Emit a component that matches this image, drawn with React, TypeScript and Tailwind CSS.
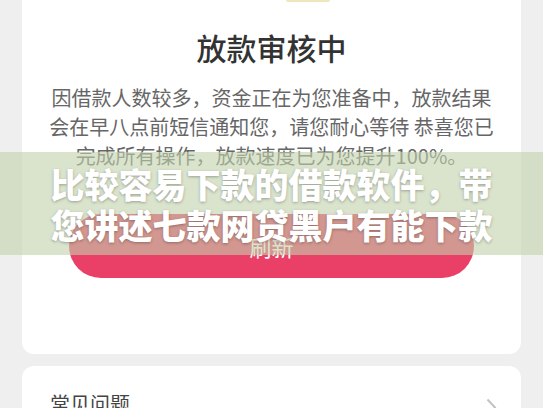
export default function App() {
  return (
    <div className="relative h-[408px] overflow-hidden bg-[#efefef] px-[22px] font-['Noto_Sans_CJK_SC','Noto_Sans',sans-serif]">
      <div className="flex flex-col items-center rounded-b-[12px] bg-white pb-[76px]">
        <div className="ml-[72px] h-[2px] w-[44px] rounded-b-full bg-[#efe6bd]" />
        <h1 className="mt-[27px] text-[30px] leading-[36px] font-medium text-[#333]">放款审核中</h1>
        <p className="mt-[18px] text-center text-[20px] leading-[29px] text-[#666]">
          因借款人数较多，资金正在为您准备中，放款结果
          <br />
          会在早八点前短信通知您，请您耐心等待 恭喜您已
          <br />
          完成所有操作，放款速度已为您提升100%。
        </p>
        <button className="mt-[44px] flex h-[64px] w-[405px] items-center justify-center rounded-full bg-[#ea4068] text-[22px] text-white">
          刷新
        </button>
      </div>

      <div className="mt-[12px] flex items-start justify-between rounded-[12px] bg-white pt-[24px] pr-[24px] pl-[28px]">
        <span className="text-[20px] leading-[28px] text-[#444]">常见问题</span>
        <svg width="11" height="19" viewBox="0 0 11 19" className="mt-[8px]">
          <polyline points="1.5,1.5 9,9.5 1.5,17.5" fill="none" stroke="#c2c2c2" strokeWidth="2" />
        </svg>
      </div>

      <div className="absolute top-[152px] right-0 left-0 flex h-[103px] items-center justify-center bg-[rgba(193,210,172,0.6)]">
        <div className="text-center text-[34px] leading-[41px] font-black text-white [text-shadow:0_1px_3px_rgba(0,0,0,0.3)]">
          比较容易下款的借款软件，带
          <br />
          您讲述七款网贷黑户有能下款
        </div>
      </div>
    </div>
  );
}
